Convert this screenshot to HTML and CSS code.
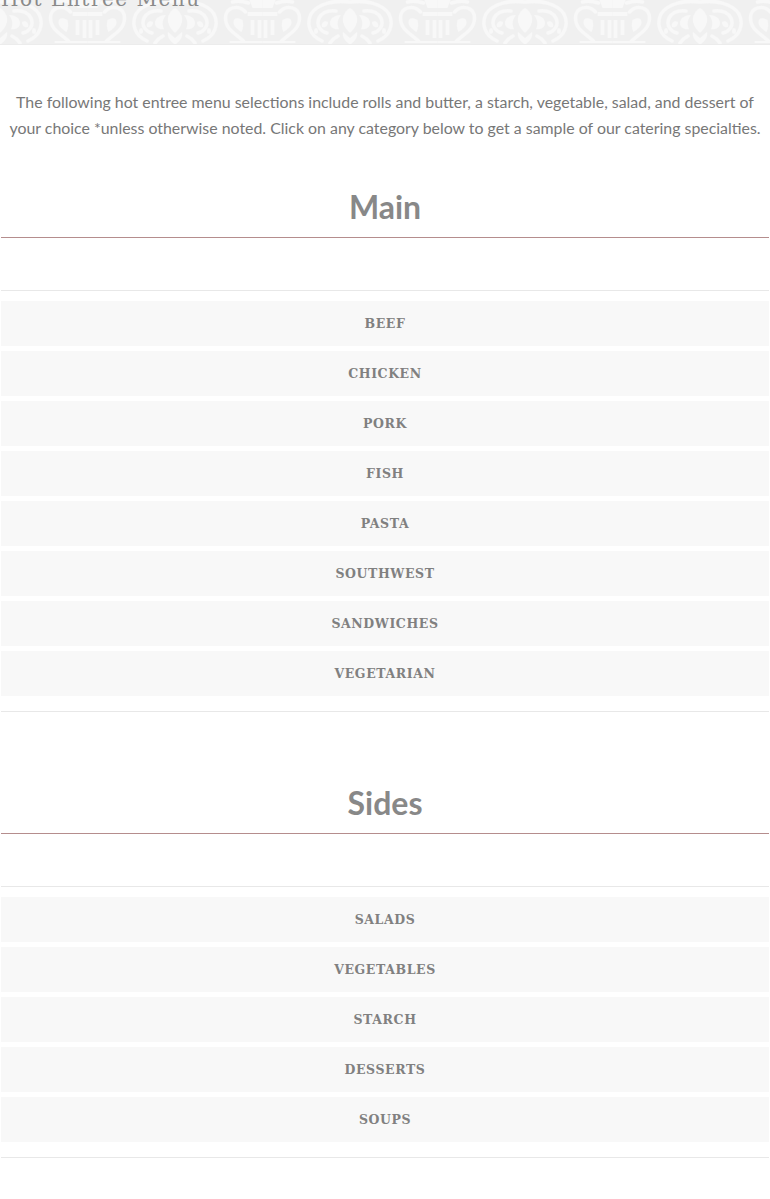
FILE: index.html
```html
<!DOCTYPE html>
<html lang="en">
<head>
  <meta charset="UTF-8" />
  <meta name="viewport" content="width=device-width, initial-scale=1.0"/>
  <title>Hot Entree Menu</title>
  <link rel="stylesheet" href="styles.css">
</head>
<body>
<header class="banner">
  <svg class="banner-art" width="770" height="44" aria-hidden="true">
    <defs>
      <filter id="soften"><feGaussianBlur stdDeviation="0.6"/></filter>
      <g id="damaskHalf">
        <g fill="none" stroke="#f8f8f8" stroke-width="3.5" stroke-linecap="round">
          <path d="M1 2 C14 0 32 3 39 14 C44 24 40 36 28 41"/>
          <path d="M14 11 C22 10 28 13 31 18 C34 25 30 31 23 33"/>
          <path d="M12 36 C16 38 18 40 20 43"/>
        </g>
        <g fill="#f8f8f8">
          <path d="M0 8 C6 12 9 18 6 25 C4 29 2 31 0 33 Z"/>
          <path d="M9 15 C15 15 20 18 20 23 C20 28 15 30 11 29 C13 25 13 20 9 15 Z"/>
          <path d="M7 32 C8 37 5 41 1 44 L0 44 L0 38 Z"/>
          <path d="M22 22 C26 20 29 23 28 27 C25 28 22 26 22 22 Z"/>
          <path d="M33 28 C36 28 37 31 35 34 C32 34 31 31 33 28 Z"/>
        </g>
      </g>
      <g id="urnHalf">
        <g fill="none" stroke="#f8f8f8" stroke-width="3.5" stroke-linecap="round">
          <path d="M17 12 C24 4 37 7 37 18 C37 30 26 34 19 41"/>
          <path d="M14 3 C20 1 26 1 30 2"/>
        </g>
        <g fill="#f8f8f8">
          <path d="M20 20 C25 17 29 18 29 22 C29 27 25 29 21 32 C19 28 19 24 20 20 Z"/>
          <path d="M0 0 L13 0 L10 8 L0 8 Z"/>
          <rect x="0" y="12" width="15" height="4"/>
          <rect x="1" y="20" width="4" height="18"/>
          <rect x="8" y="20" width="4" height="15"/>
          <rect x="0" y="41" width="33" height="2"/>
        </g>
      </g>
      <g id="damask">
        <use href="#damaskHalf"/>
        <use href="#damaskHalf" transform="scale(-1 1)"/>
      </g>
      <g id="urn">
        <use href="#urnHalf"/>
        <use href="#urnHalf" transform="scale(-1 1)"/>
      </g>
      <pattern id="damaskTile" width="175" height="44" patternUnits="userSpaceOnUse">
        <use href="#damask"/>
        <use href="#urn" x="87.5"/>
        <use href="#damask" x="175"/>
      </pattern>
    </defs>
    <rect width="770" height="44" fill="#f0f0f0"/>
    <rect width="770" height="44" fill="url(#damaskTile)" filter="url(#soften)"/>
  </svg>
  <h1 class="page-title">Hot Entree Menu</h1>
</header>

<main class="content">
  <p class="intro">The following hot entree menu selections include rolls and butter, a starch, vegetable, salad, and dessert of<br>your choice *unless otherwise noted. Click on any category below to get a sample of our catering specialties.</p>

  <section class="menu-group">
    <h2>Main</h2>
    <div class="accordion">
      <div class="menu-item">Beef</div>
      <div class="menu-item">Chicken</div>
      <div class="menu-item">Pork</div>
      <div class="menu-item">Fish</div>
      <div class="menu-item">Pasta</div>
      <div class="menu-item">Southwest</div>
      <div class="menu-item">Sandwiches</div>
      <div class="menu-item">Vegetarian</div>
    </div>
  </section>

  <section class="menu-group sides">
    <h2>Sides</h2>
    <div class="accordion">
      <div class="menu-item">Salads</div>
      <div class="menu-item">Vegetables</div>
      <div class="menu-item">Starch</div>
      <div class="menu-item">Desserts</div>
      <div class="menu-item">Soups</div>
    </div>
  </section>
</main>
</body>
</html>
```

FILE: styles.css
```css
* { box-sizing: border-box; margin: 0; padding: 0; }

body {
  font-family: "Lato", "Open Sans", Arial, sans-serif;
  background: #fff;
  color: #777;
}

.banner {
  position: relative;
  height: 45px;
  overflow: hidden;
  border-bottom: 1px solid #ececec;
}

.banner-art {
  position: absolute;
  top: 0;
  left: 0;
  display: block;
}

.page-title {
  position: relative;
  margin-top: -13px;
  padding-left: 1px;
  font-family: "DejaVu Serif", "Liberation Serif", serif;
  font-size: 20px;
  font-weight: 400;
  line-height: 24px;
  letter-spacing: 1.5px;
  color: #8a8a8a;
}

.content {
  padding: 44px 1px 0;
}

.intro {
  font-size: 15.9px;
  line-height: 26px;
  text-align: center;
  white-space: nowrap;
  color: #777;
}

.menu-group {
  margin-top: 47px;
}

.menu-group.sides {
  margin-top: 72px;
}

.menu-group h2 {
  padding-top: 1px;
  font-size: 32px;
  line-height: 36px;
  font-weight: 700;
  text-align: center;
  color: #888;
  padding-bottom: 12px;
  border-bottom: 1px solid #b58d8d;
}

.accordion {
  margin-top: 52px;
  padding: 10px 0 15px;
  border-top: 1px solid #e8e8e8;
  border-bottom: 1px solid #e8e8e8;
  display: flex;
  flex-direction: column;
  gap: 5px;
}

.menu-item {
  height: 45px;
  background: #f8f8f8;
  font-family: "DejaVu Serif", "Liberation Serif", serif;
  font-size: 12.5px;
  font-weight: 700;
  line-height: 45px;
  letter-spacing: 0.6px;
  text-align: center;
  text-transform: uppercase;
  color: #808080;
}
```
